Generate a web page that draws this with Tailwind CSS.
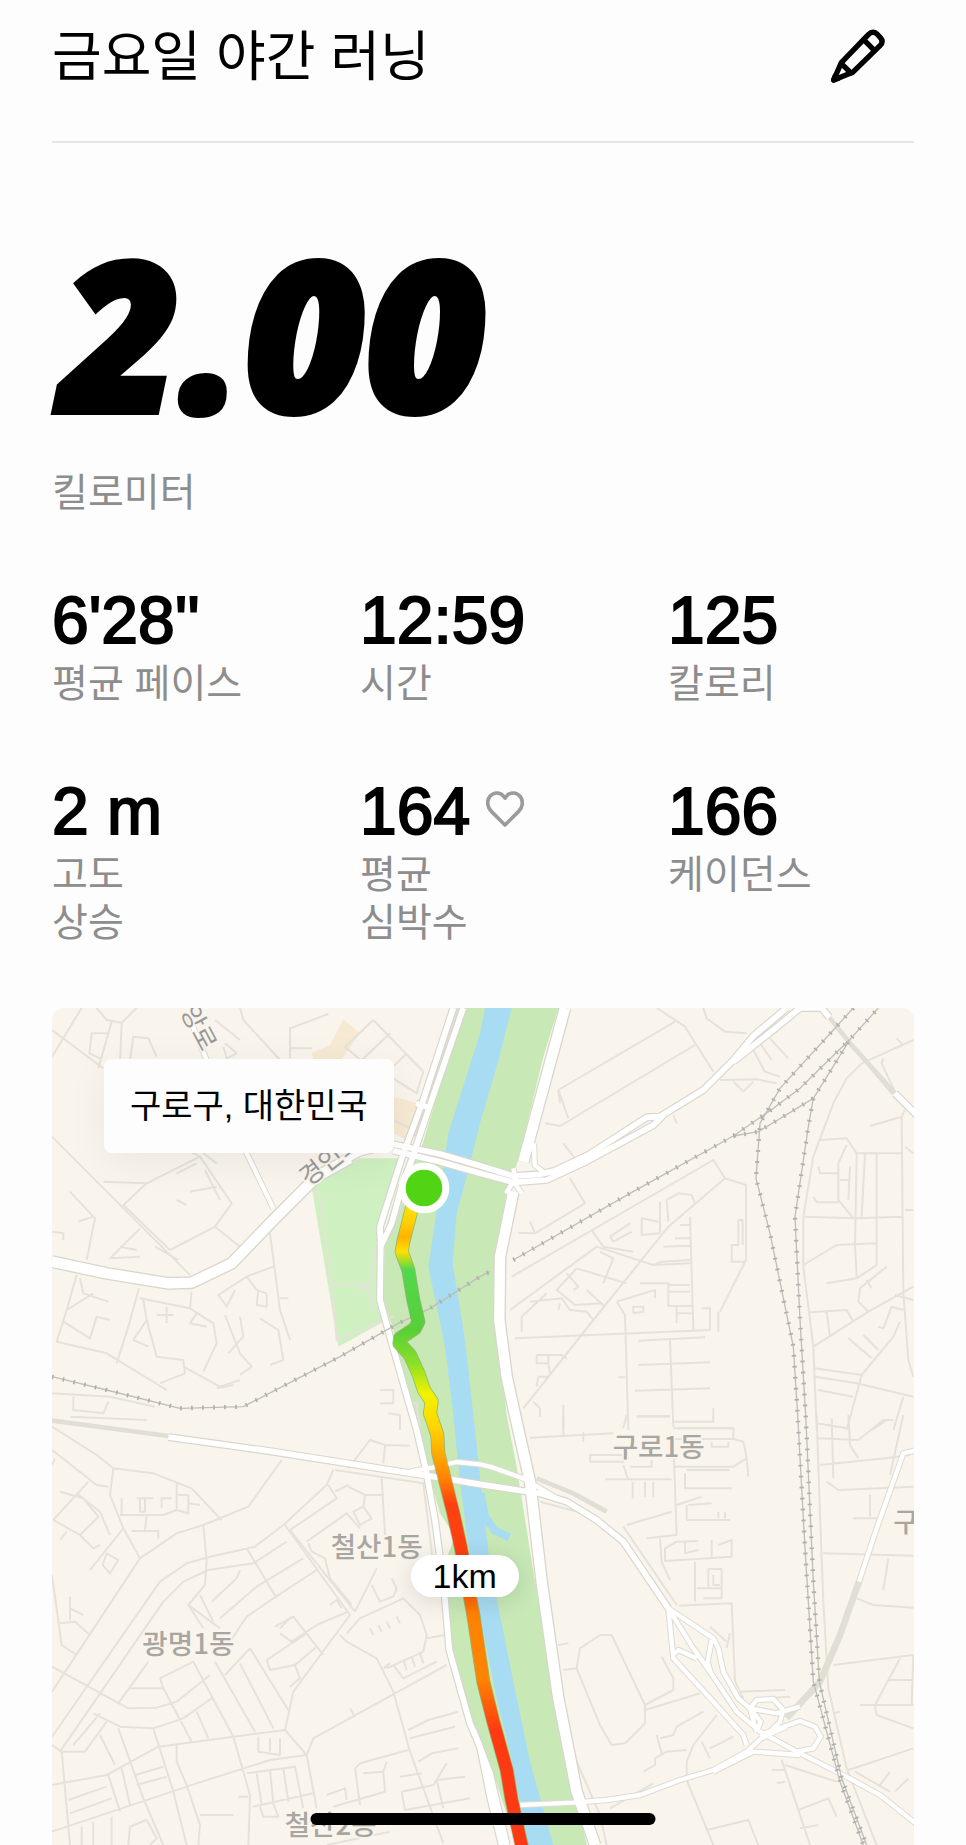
<!DOCTYPE html>
<html lang="ko">
<head>
<meta charset="utf-8">
<meta name="viewport" content="width=device-width, initial-scale=1">
<title>금요일 야간 러닝</title>
<script src="https://cdn.jsdelivr.net/npm/@tailwindcss/browser@4"></script>
</head>
<body class="overflow-x-hidden bg-[#fdfdfd] font-['Liberation_Sans','Noto_Sans_CJK_KR',sans-serif] text-black">
<main class="px-[52px]">
  <header class="flex h-[143px] items-start justify-between border-b-2 border-[#e5e5e5] pt-4">
    <h1 class="pt-px text-[54px] leading-[80px]">금요일 야간 러닝</h1>
    <button type="button" aria-label="이름 편집" class="mt-3 mr-7 shrink-0">
      <svg class="block size-[56px]" viewBox="153 85 168 168" fill="none" stroke="#000" stroke-width="16" stroke-linejoin="round" stroke-linecap="round">
        <path d="M164 241 187 189 268 105Q281 92 294 103L304 114Q315 126 303 138L221 218Z"/>
        <path d="M254 120 286 152M187 192 216 220"/>
        <path d="M164 241 169 228 178 236Z" fill="#000"/>
      </svg>
    </button>
  </header>

  <section class="pt-[79px]">
    <p class="pl-2 font-['Open_Sans',sans-serif] text-[208px] leading-[220px] font-extrabold italic [-webkit-text-stroke:6px_black]">2.00</p>
    <p class="mt-[23px] text-[39px] leading-[56px] text-[#8d8d8d]">킬로미터</p>
  </section>

  <dl class="mt-[59px] grid grid-cols-3 gap-x-[62px] gap-y-[63px] text-[39px] leading-[48px] text-[#8d8d8d]">
    <div class="flex flex-col-reverse justify-end"><dt>평균 페이스</dt><dd class="text-[66px] leading-[80px] text-black [-webkit-text-stroke:2px_black]">6'28''</dd></div>
    <div class="flex flex-col-reverse justify-end"><dt>시간</dt><dd class="text-[66px] leading-[80px] text-black [-webkit-text-stroke:2px_black]">12:59</dd></div>
    <div class="flex flex-col-reverse justify-end"><dt>칼로리</dt><dd class="text-[66px] leading-[80px] text-black [-webkit-text-stroke:2px_black]">125</dd></div>
    <div class="flex flex-col-reverse justify-end"><dt>고도<br>상승</dt><dd class="text-[66px] leading-[80px] text-black [-webkit-text-stroke:2px_black]">2 m</dd></div>
    <div class="flex flex-col-reverse justify-end"><dt>평균<br>심박수</dt><dd class="flex items-center gap-4 text-[66px] leading-[80px] text-black [-webkit-text-stroke:2px_black]">164
      <svg class="mb-1 h-9 w-[38px]" viewBox="77 59 114 108" fill="none" stroke="#9b9b9b" stroke-width="11" stroke-linejoin="round" aria-hidden="true"><path d="M134 161 93 120C80 107 79 88 88 76 99 62 119 61 130 75L134 80 138 75C149 61 169 62 180 76 189 88 188 107 175 120Z"/></svg></dd></div>
    <div class="flex flex-col-reverse justify-end"><dt>케이던스</dt><dd class="text-[66px] leading-[80px] text-black [-webkit-text-stroke:2px_black]">166</dd></div>
  </dl>

  <section aria-label="러닝 경로 지도" class="relative mt-[61px] overflow-hidden rounded-t-xl bg-[#f9f5ed]">
    <svg class="block h-auto w-full" viewBox="36 24 2586 2511" fill="none" stroke-linejoin="round" font-family="'Noto Sans CJK KR', sans-serif">
      <defs>
        <linearGradient id="pace" gradientUnits="userSpaceOnUse" x1="0" y1="600" x2="0" y2="2540">
          <stop offset="0" stop-color="#ffe600"/><stop offset=".03" stop-color="#ffd400"/><stop offset=".057" stop-color="#ffb300"/><stop offset=".08" stop-color="#fde000"/><stop offset=".108" stop-color="#52d84c"/><stop offset=".2" stop-color="#58cf38"/><stop offset=".25" stop-color="#86df28"/><stop offset=".3" stop-color="#f2f200"/><stop offset=".35" stop-color="#ffd500"/><stop offset=".43" stop-color="#ff8400"/><stop offset=".47" stop-color="#ff4010"/><stop offset=".58" stop-color="#ff4010"/><stop offset=".64" stop-color="#ff8200"/><stop offset=".74" stop-color="#ff8400"/><stop offset=".82" stop-color="#ff3a12"/><stop offset="1" stop-color="#fb3a14"/>
        </linearGradient>
        <g id="arterial">
          <path d="M1575 24 1530 190 1450 485M1420 575 1380 770 1378 960 1400 1130 1425 1245 1470 1445 1505 1745 1555 2095 1610 2375 1665 2535"/>
          <path d="M36 785 200 820 385 850 455 848 575 790 700 660 830 530 930 475"/>
        </g>
        <g id="road">
          <path d="M900 490 960 458 1060 433 1200 462 1320 497 1420 528 1500 523 1545 512 1650 462 1820 352 1860 350 1990 270 2080 180 2140 108 2240 24"/>
          <path d="M1060 452 1200 485 1320 520 1420 547 1520 540 1640 484 1840 376 1870 345"/>
          <path d="M2080 185 2200 90 2280 24 2345 24 2368 52M2565 280 2640 355"/>
          <path d="M1240 24 1150 300 1085 475 1020 680 1022 740 1020 900 1050 1010 1130 1290 1158 1410 1185 1560 1212 1765 1228 1950 1290 2170 1320 2240 1350 2390 1385 2535"/>
          <path d="M1300 2190 1350 2320 1400 2535"/>
          <path d="M1270 24 1165 330 1115 480 1085 560 1055 670 1022 740M1128 310 1165 322"/>
          <path d="M385 1311 700 1355 1100 1418 1200 1433 1320 1453 1450 1473 1500 1480 1580 1505 1670 1560 1750 1625 1885 1825"/>
        </g>
        <g id="ramp">
          <path d="M1110 1415 1180 1402 1250 1386 1320 1393 1350 1400 1450 1435 1560 1500"/>
          <path d="M1440 2415 1600 2408 1700 2400 1800 2385 1920 2340 2020 2310 2120 2255 2170 2210 2240 2180"/>
          <path d="M1885 1825 2020 1915 2035 1945 2050 2015 2095 2095 2130 2125 2150 2195"/>
          <path d="M1885 1825 1900 1975 2020 2105 2110 2205 2120 2235"/>
          <path d="M1885 1825 1960 1945 2010 2015 2090 2135 2160 2195 2280 2260 2410 2325 2520 2385 2640 2480"/>
          <path d="M1898 1965 1915 1950 1970 1975M2015 1920 2003 1985 2012 2020"/>
          <path d="M2130 2125 2150 2100 2200 2097 2230 2130 2220 2165 2170 2215M2130 2125 2210 2140 2280 2120M2130 2125 2162 2165 2150 2195"/>
          <path d="M2160 2205 2280 2163 2325 2180 2342 2210 2320 2245 2270 2255"/>
          <path d="M2020 2315 2140 2255 2280 2265"/>
          <path d="M440 34 500 180 620 460 700 625"/>
          <path d="M2640 1348 2590 1360 2510 1585 2457 1745"/>
          <path d="M1420 505 1432 555M1398 580 1420 545 1445 580M1482 430 1484 495 1515 520"/>
        </g>
        <g id="rail">
          <path d="M36 1130 200 1170 420 1225 610 1220 900 1070 1075 970 1170 925 1320 830 1350 815M1420 780 1770 580 2080 408 2200 325 2280 265 2430 118 2515 24"/>
          <path d="M2440 24 2380 90 2220 265 2160 370 2148 535 2190 700 2260 1040 2273 1245 2295 1645 2320 2045 2400 2345 2470 2535"/>
          <path d="M2080 408 2155 395 2320 295 2430 118M2320 295 2305 380 2265 650 2280 960 2297 1245 2320 1745 2338 2045 2405 2335 2480 2535"/>
        </g>
      </defs>

      <!-- Blocks, parks and river -->
      <path fill="#f7ead3" d="M910 58 960 100 905 178H820L815 160 870 135ZM1060 290 1135 310 1110 425 1060 400Z"/>
      <path fill="#cff0c0" d="M815 560 870 510 960 475H1085L1020 690 1015 900 1040 960 895 1040Z"/>
      <path fill="#c8e8b6" d="M1270 24H1555L1510 170 1435 480 1400 570 1370 760 1365 960 1395 1200 1400 1245 1430 1400 1485 1745 1560 2095 1600 2345 1640 2535H1430L1370 2350 1320 2220 1280 2140 1225 1980 1218 1740 1225 1660 1245 1610 1200 1540 1160 1400 1110 1250 1060 990 1030 900 1035 690 1100 490 1145 440Z"/>
      <path fill="#a8dcf2" d="M1335 24H1415L1370 200 1320 370 1280 530 1250 640 1238 790 1275 1020 1305 1290 1325 1480 1350 1695 1380 1845 1420 2045 1470 2285 1540 2535H1465L1410 2255 1370 2095 1320 1845 1280 1600 1255 1400 1240 1245 1215 1040 1165 800 1195 600 1225 400 1320 100Z"/>
      <path stroke="#a8dcf2" stroke-width="24" d="M1322 1480 1335 1550 1365 1592 1408 1612"/>

      <!-- Side streets: north-west -->
      <g stroke="#e6e2d9" stroke-width="6">
        <path d="M125 24 36 170M36 90 190 205M170 24 200 60 245 68 290 24M215 65 175 205M245 68 240 190M205 100H155L148 160 180 175M270 180 280 110 325 115 350 170M525 60 600 120M600 24 610 60 720 180M555 130 590 160 560 175 550 140M865 42 750 85V175M750 145H815"/>
        <path d="M1000 60 915 140 1050 255M1000 60 1150 215 1130 280 1060 235M1050 100 960 185M1100 160 1020 240M1060 360 1110 385"/>
        <path d="M36 410 450 825M190 545 320 550 250 615 390 750M320 550 480 470 575 610 525 680 390 750M465 440 530 490M480 470 385 420M410 520 470 490M525 680 600 740M495 510 540 600M410 600 440 615M450 575 530 560M300 685 210 775 300 770M240 740 290 750M345 740 415 780M90 575 165 655 140 780M115 665 160 650M36 695 70 700V720"/>
        <path d="M110 825 80 930 50 1025 200 1060 380 1170M80 930 160 880M70 965 150 1015 170 950 210 960M120 835 130 880 205 905M297 865 265 980 230 1090M300 895 450 925 520 970 530 1030 490 1115M455 875 450 925M310 900 320 960 280 1020 325 1040M350 945H400M380 920V970M320 960 350 1070 430 1080 435 1120 360 1150M470 940 450 970 500 980M430 1100 540 1160 600 1140"/>
        <path d="M690 700 720 930 750 1020M720 895H745M620 830 700 800M620 830 535 885 560 920 585 870M620 830 650 870 680 880V920L650 915 655 870M555 945 600 1060 635 1100 600 1125M600 950 610 1010 565 1060M660 955 715 990 730 1080 690 1095M530 1165 580 1155M36 1180 210 1190 345 1220M100 1190V1230L190 1240 205 1205M90 1250 320 1260"/>
        <path d="M835 570 855 700 875 850 985 855 1010 740M875 850 890 1020 1060 950M950 880 985 860 1000 940M1020 1170H1060V1210H1020M1045 1240 1080 1245V1290M1110 1210H1130L1140 1290"/>
      </g>

      <!-- Side streets: north-east -->
      <g stroke="#e6e2d9" stroke-width="6" transform="translate(1320 0)">
        <path d="M530 24 615 80 700 215M585 65 235 270 265 355M645 135 240 378 195 370M235 270 240 310M670 24 680 55 735 95 800 100M820 150 855 215 900 230M840 130 875 180M870 115 925 175M720 240 830 238 890 250M760 245 790 275 820 245M250 430 285 475M270 535 315 610 165 700 115 698M165 700 150 665M580 345 590 370"/>
        <path d="M95 830 700 480 735 535 565 680 340 960 130 1225M90 930 350 740 520 795 630 790M735 535 798 555V780L720 935M565 665 560 600 595 580 635 585 645 610M485 655V705L540 700M485 655 535 665M540 605V700M630 650 640 990M600 675H630M585 715H630M550 740 630 737M520 795 545 785 630 780M775 660V735H755V785H795M775 660H788V735"/>
        <path d="M335 690 370 740 460 755M390 710 450 670M390 710 400 725 455 695M360 755 400 775 370 850M290 805 440 850M290 805 230 870 285 915 365 910M260 820 295 860 280 870M320 870 375 920M150 905 245 895 270 930 320 935 340 960M125 995V950L200 880M235 930 240 910M480 850H565V918H640M565 855H630M565 875H630M590 920V970M590 940H640M410 905 525 870V895M410 905 435 945 445 1290M460 940V920H490V935L460 940M105 1015 690 990V925H665M715 995V935"/>
        <path d="M475 1022 675 1012M475 1095 690 1087M465 1172 690 1165M470 1248H570M570 1022 580 1280M580 1265H700V1225M590 1285H760M170 1065H245L260 1075M170 1065V1090H205V1065M205 1090 210 1120M175 1130H205M170 1160 175 1130M415 1132H435M250 1215V1290M160 1205 180 1225V1250"/>
        <path d="M1145 190 1100 235 1060 310 1000 470 970 650V800L1000 1040 1010 1290M1145 190 1300 120M1250 115 1265 130M1245 275 1205 190 1210 175M1170 378 1265 350 1275 330M1265 350 1270 880 1285 1080 1300 1130M1020 420 1100 415 1130 460H1265M1130 460 1125 740 1130 830M1155 460 1145 650M1190 460V795L1130 835 1040 850M1100 435 1075 490V600L1120 655M975 650 1125 655 1265 650M1015 500 1020 520H1075M1000 590 1010 607H1075M1110 500 1105 600M1080 540H1105M970 795 1070 735 1190 730"/>
        <path d="M1000 1040 1165 935 1300 860M990 937 1100 930 1120 965M1040 935 1050 1010M1165 935 1135 905 1140 865 1220 800M1160 840 1175 865M1005 1105 1145 1125 1240 1010 1260 965M1145 1125 1100 1290M1105 1015 1175 1075M1150 1005 1195 1050M1005 1130 1130 1150 1300 1190M1015 1170 1120 1190M1195 980 1210 985 1235 920 1270 930M1245 885 1300 900M1270 1190 1240 1290M1175 1290 1220 1260H1240M1275 440 1300 460M1275 630H1300"/>
      </g>

      <!-- Side streets: south-west -->
      <g stroke="#e6e2d9" stroke-width="6" transform="translate(0 1245)">
        <path d="M36 35 170 120 220 160 340 175 455 220 545 315M36 105 170 210 205 215M220 160 210 240 250 340 300 430M725 135 625 275 490 330 410 355 300 430 36 830M250 340 150 465M45 130 36 150M145 200 40 315 120 360 175 305 130 250 60 230M110 235 180 290 210 360M120 360 160 400 180 390M60 375 80 350M200 415 235 435 210 475 188 450ZM240 300H370L410 285V205M245 250V300M290 250H340M300 250V290H315V250M365 280V250H395M320 300 315 345M275 348H355V370M415 240H445V295L410 285M445 265 480 270"/>
        <path d="M490 330 500 440 495 510 445 570 540 640M880 165 860 210 730 330 645 395 510 425 440 445 360 500 36 965M865 210 890 250 750 345M885 165 1150 205 1180 450M505 465 640 445 740 380M505 465 430 500 370 560 60 1010M620 400 710 550M735 330 930 600M750 345 945 590M1025 190 1035 360M925 215 975 240H1025M975 240 970 275 995 310 960 330 940 290 970 275M885 230 925 210M925 160 990 75 1035 90 1110 92M1035 90 1030 145"/>
        <path d="M800 380 920 295 960 340M805 385 815 410 855 430 870 490 935 570M600 465 590 490 515 560M790 430 650 515 540 610M830 465 700 550 620 605 570 680M945 590 1010 460M930 600 760 830 735 945 800 1020 830 1180M480 540 520 620M445 570 490 640M705 635 760 605 850 720M720 655 755 680 830 630 925 590M755 605 720 640M680 735 690 765 765 750 830 695M680 735 800 655M750 815 780 790 765 750M870 570 890 555 905 580M900 660 920 680 1010 730 1060 830 1110 1010 1210 1285M920 655 960 610 1090 550 1140 600 1160 660 1150 710 1040 760M1215 660 1160 670M1220 750 1065 835 820 970 800 1020M995 510 1020 560 1060 545 1070 520 1055 490M990 640 1000 660M1015 630 1025 650M1040 620 1050 640M1070 605 1080 625M1030 760 1050 745M1060 750 1090 790 1190 740M1090 735 1100 765M1115 725 1125 755M1140 715 1150 745"/>
        <path d="M36 755 265 880 350 878 410 860 510 780M325 740 235 865M360 790 460 740M360 790 370 820 455 980M270 820H370M460 740 580 965 630 1140 625 1290M525 740 645 950M600 745 700 940M630 700 745 885M555 780 630 700M160 895 240 935 340 940 430 910 515 850M470 890 505 970M36 990 65 1010 90 1290M65 1010 135 1010 200 920M100 990 180 895M36 1110 200 1080 355 995 735 945M180 960 225 1050M235 940 310 1150 370 1290M340 940 400 1130 440 1290M410 985V1040L440 1110 480 1230 475 1290M36 1250 290 1165 470 1105 690 1035 800 1020M85 1155 200 1115M90 1195 215 1150M205 1080 240 1190M245 1060 270 1170M285 1080 370 1055M290 1110 380 1085M125 1235V1290M160 1220V1290M215 1205V1290M265 1290 270 1235 320 1215 350 1270 330 1290"/>
        <path d="M655 965V1010L720 1020V970M690 970V1010M620 1075 765 1055 790 1180M650 1075 665 1170M690 1065 700 1165M730 1060 745 1160M640 1175 820 1135M660 1175 670 1205H715L700 1165M595 1145H625M480 1200H580M930 880 945 905M945 1060 960 1045 1105 1005M945 1060 960 1170M970 1075 1030 1070 1040 1040M1030 1070 1035 1130 880 1175M860 1140 915 1120 920 1155M1105 945 1165 915 1255 890M1110 970 1245 935M1135 1040 1175 1015 1255 1000M1080 1085 1145 1075M1085 1130 1180 1110 1220 1045M1085 1130 1095 1185 1290 1150M1190 1095 1275 1085M1190 1095 1210 1180M36 480 65 690 110 720M60 625 105 620 150 660M90 545V615M90 580 130 600M860 1290 1050 1250"/>
      </g>

      <!-- Side streets: south-east -->
      <g stroke="#e6e2d9" stroke-width="6" transform="translate(1320 1245)">
        <path d="M150 68 400 55M250 0V60M310 50V80M440 0 430 40M470 5H570M580 40H760V72H580M580 72 590 360 500 370M695 80V95H745V80M330 120H430V140H330ZM430 150 445 195M450 155H515V135M375 193H575M458 200V250M495 200V245M520 200V245M580 155H760L800 130 805 185M615 175V220H755M620 165H750M440 330 575 290M590 270 665 245M620 270V315M625 270 695 265M620 315H750M715 290V310M735 290V310M760 72 790 80 800 130"/>
        <path d="M540 370 545 440 570 495M555 400V438L755 425V375L715 390M555 400 590 380 655 378M615 380V415L655 405M695 375V425M645 440V560M650 520H725V462H685V515M700 480V510H720M670 550H725V520M595 572 755 565 765 800 790 850M430 335 590 570M235 690 265 685M250 765 290 760 300 700 360 660H395L495 870V925L435 985 395 990 360 930 290 760M495 870 580 825V790L545 725M495 885 660 835M490 1070 525 1050V1030L560 1010 620 1005M530 960 545 1015M540 970 580 960 590 935 670 890M620 1095V1040L640 990 710 900M665 980 690 1030M690 1000 760 965M620 1095 700 1290M680 1245 805 1215 835 1290M905 1035 990 1290M875 1065H915M890 1105 915 1100M915 1050 1070 1100M955 1185 1045 1150 1070 1205M960 1240 1015 1230M780 830 915 825M850 850 930 845M690 635 740 680M740 700 750 655"/>
        <path d="M1010 0 1020 300 1030 560 1045 820 1100 1060 1190 1290M1010 25 1100 40M1015 70 1135 75 1210 15H1235M1105 0 1110 90 1135 130M1020 150 1215 130 1290 120M1055 10 1060 190M1040 200 1075 225 1300 215M1170 240V305M1120 310H1200M1270 0 1230 180M1030 415 1300 422M1225 430 1210 525M1130 550 1180 570 1300 578M1060 750 1300 720M1260 730 1185 870 1190 900 1300 940M1225 795H1300M1140 870H1300M1300 720 1295 870M1105 1065 1300 1000M1125 1070 1230 1130M1200 1110 1230 1070M1245 1130 1285 1090M1060 895 1080 890"/>
        <path d="M180 260 330 300M245 850 290 1040 360 1200 380 1290M390 1180 520 1105"/>
      </g>

      <!-- Tunnels -->
      <g stroke="#e1ded4">
        <path stroke-width="14" d="M36 1262 385 1308M2368 52 2430 130 2565 280M2450 150 2560 280"/>
        <path stroke-width="20" d="M2457 1745 2400 1905 2340 2045 2240 2155"/>
        <path stroke-width="14" d="M1490 1435 1600 1480 1700 1535"/>
        <path stroke-width="14" d="M1255 24 1165 290M1150 330 1125 410M1090 590 1050 690"/>
      </g>

      <use href="#arterial" stroke="#d9d6cc" stroke-width="39"/>
      <use href="#road" stroke="#d9d6cc" stroke-width="24"/>
      <use href="#ramp" stroke="#dedbd1" stroke-width="19"/>
      <g stroke="#fff">
        <use href="#arterial" stroke-width="31"/>
        <use href="#road" stroke-width="17"/>
        <use href="#ramp" stroke-width="13"/>
      </g>
      <use href="#rail" stroke="#c0beba" stroke-width="4"/>
      <use href="#rail" stroke="#b0afac" stroke-width="13" stroke-dasharray="5 28"/>

      <!-- Place names -->
      <g fill="#a9a6a2" font-size="83" font-weight="500" stroke="#f9f5ed" stroke-width="10" paint-order="stroke">
        <text x="872" y="1670">철산1동</text>
        <text x="307" y="1961">광명1동</text>
        <text x="734" y="2505">철산2동</text>
        <text x="1718" y="1370">구로1동</text>
        <text x="2560" y="1596">구</text>
        <text font-size="76" font-weight="400" fill="#999" transform="translate(420 34) rotate(62)">앙로</text>
        <text font-size="76" font-weight="400" fill="#999" transform="translate(805 562) rotate(-38)">경인로</text>
      </g>

      <!-- Recorded route -->
      <g stroke-linecap="round">
        <path stroke="#5a7a20" stroke-opacity=".45" stroke-width="42" d="M1122 600 1090 725 1085 755 1105 810 1120 900 1135 965 1125 985 1080 1015 1078 1030 1110 1065 1135 1120 1152 1170 1175 1205 1170 1240 1192 1305 1195 1360 1215 1440 1240 1540 1262 1640 1300 1845 1330 2045 1360 2165 1400 2310 1415 2400 1450 2560"/>
        <path stroke="url(#pace)" stroke-width="37" d="M1122 600 1090 725 1085 755 1105 810 1120 900 1135 965 1125 985 1080 1015 1078 1030 1110 1065 1135 1120 1152 1170 1175 1205 1170 1240 1192 1305 1195 1360 1215 1440 1240 1540 1262 1640 1300 1845 1330 2045 1360 2165 1400 2310 1415 2400 1450 2560"/>
      </g>
      <circle cx="1152" cy="564" r="76" fill="#fff"/>
      <circle cx="1152" cy="564" r="55" fill="#50d414"/>
    </svg>
    <p class="absolute top-[51px] left-[52px] rounded-lg bg-[#fdfdfd] px-[26px] text-[34px] leading-[94px] shadow-[0_8px_40px_rgba(0,0,0,0.06)]">구로구, 대한민국</p>
    <p class="absolute top-[65.4%] left-[41.6%] rounded-full bg-white px-[22px] text-[34px] leading-[42px] shadow-[0_4px_24px_rgba(0,0,0,0.12)]">1km</p>
  </section>
</main>
<div aria-hidden="true" class="fixed bottom-5 left-1/2 h-3 w-[345px] -translate-x-1/2 rounded-full bg-black"></div>
</body>
</html>
